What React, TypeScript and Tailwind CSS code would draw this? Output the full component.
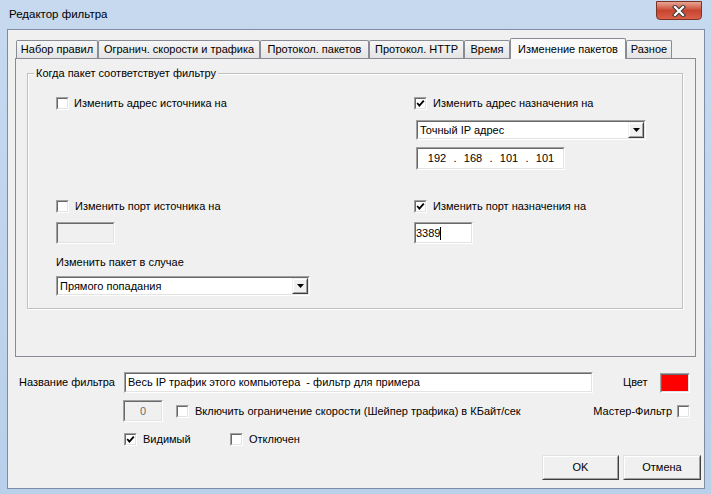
import React from "react";

function Sunken({
  className,
  inner,
  children,
}: {
  className: string;
  inner: string;
  children?: React.ReactNode;
}) {
  return (
    <div
      className={
        "shrink-0 border border-t-[#a0a0a0] border-l-[#a0a0a0] border-r-white border-b-white " +
        className
      }
    >
      <div
        className={
          "w-full h-full border border-t-[#696969] border-l-[#696969] border-r-[#e3e3e3] border-b-[#e3e3e3] " +
          inner
        }
      >
        {children}
      </div>
    </div>
  );
}

function Check({ checked, className }: { checked?: boolean; className?: string }) {
  return (
    <div
      className={
        "w-[13px] h-[13px] shrink-0 border border-t-[#a0a0a0] border-l-[#a0a0a0] border-r-white border-b-white " +
        (className ?? "")
      }
    >
      <div className="w-full h-full border border-t-[#696969] border-l-[#696969] border-r-[#e3e3e3] border-b-[#e3e3e3] bg-white flex items-center justify-center">
        {checked && (
          <svg width="9" height="9" viewBox="0 0 9 9">
            <path d="M1.2 4 L3.4 6.6 L7.8 1.6" stroke="#000" strokeWidth="1.8" fill="none" />
          </svg>
        )}
      </div>
    </div>
  );
}

function Raised({
  className,
  children,
}: {
  className: string;
  children?: React.ReactNode;
}) {
  return (
    <div
      className={
        "shrink-0 border border-t-[#e3e3e3] border-l-[#e3e3e3] border-r-[#404040] border-b-[#404040] " +
        className
      }
    >
      <div className="w-full h-full border border-t-white border-l-white border-r-[#a0a0a0] border-b-[#a0a0a0] bg-[#f0f0f0] flex items-center justify-center">
        {children}
      </div>
    </div>
  );
}

function Combo({ text, className }: { text: string; className: string }) {
  return (
    <Sunken className={className} inner="bg-white flex items-center">
      <span className="pl-[2px] flex-1 leading-[13px]">{text}</span>
      <div className="w-[16px] h-full shrink-0 border border-t-[#f0f0f0] border-l-[#f0f0f0] border-r-[#404040] border-b-[#404040]">
        <div className="w-full h-full border border-t-white border-l-white border-r-[#a0a0a0] border-b-[#a0a0a0] bg-[#f0f0f0] flex items-center justify-center">
          <svg width="7" height="4" viewBox="0 0 7 4">
            <polygon points="0,0 7,0 3.5,4" fill="#000" />
          </svg>
        </div>
      </div>
    </Sunken>
  );
}

function Tab({ label, w, selected }: { label: string; w: string; selected?: boolean }) {
  if (selected) {
    return (
      <div
        className={
          "h-[21px] -mb-px relative z-10 border border-b-0 border-[#898c95] rounded-t-[2px] bg-[#fafafa] flex items-center justify-center leading-[13px] " +
          w
        }
      >
        {label}
      </div>
    );
  }
  return (
    <div
      className={
        "h-[18px] border border-b-0 border-[#898c95] rounded-t-[2px] bg-linear-to-b from-[#f6f6f6] to-[#e4e4e4] flex items-center justify-center leading-[13px] " +
        w
      }
    >
      {label}
    </div>
  );
}

export default function App() {
  return (
    <div className="w-[711px] h-[494px] overflow-hidden bg-linear-to-b from-[#c6d9ef] to-[#b9d0ea] text-[11px] text-black font-['Liberation_Sans',Arial,sans-serif] flex flex-col">
      {/* Title bar */}
      <div className="h-[29px] flex items-start shrink-0">
        <div className="pl-[9px] pt-[7px] text-[11.5px] leading-[15px] text-black">Редактор фильтра</div>
        <div className="ml-auto mr-[9px] mt-[1px] w-[46px] h-[19px] rounded-b-[4px] border border-[#7a3325] bg-linear-to-b from-[#e8a493] via-[#c7452e] to-[#d9604a] flex items-center justify-center">
          <svg width="14" height="12" viewBox="0 0 14 12">
            <path d="M3 2 L11 10 M11 2 L3 10" stroke="#3a3a3a" strokeWidth="4.2" strokeLinecap="square" fill="none" />
            <path d="M3 2 L11 10 M11 2 L3 10" stroke="#ffffff" strokeWidth="2.2" strokeLinecap="square" fill="none" />
          </svg>
        </div>
      </div>

      {/* Client area */}
      <div className="ml-[7px] w-[698px] h-[460px] shrink-0 border border-[#7d8ca3] bg-[#f0f0f0] flex flex-col">
        {/* Tabs */}
        <div className="mt-[8px] ml-[8px] h-[20px] flex items-end">
          <Tab label="Набор правил" w="w-[82px]" />
          <Tab label="Огранич. скорости и трафика" w="w-[162px]" />
          <Tab label="Протокол. пакетов" w="w-[109px]" />
          <Tab label="Протокол. HTTP" w="w-[95px]" />
          <Tab label="Время" w="w-[46px]" />
          <Tab label="Изменение пакетов" w="w-[116px]" selected />
          <Tab label="Разное" w="w-[46px]" />
        </div>

        {/* Tab panel */}
        <div className="ml-[7px] w-[681px] h-[299px] shrink-0 border border-[#898c95] bg-[#f0f0f0]">
          <div className="relative mt-[14px] ml-[11px] mr-[12px] h-[236px] border border-[#c0c0c0] shadow-[inset_1px_1px_0_#ffffff,1px_1px_0_#ffffff]">
            <div className="absolute -top-[7px] left-[6px] px-[2px] bg-[#f0f0f0] leading-[13px]">
              Когда пакет соответствует фильтру
            </div>
            <div className="flex pt-[23px] pl-[28px]">
              {/* Left column */}
              <div className="w-[358px] flex flex-col">
                <div className="h-[13px] flex items-center">
                  <Check />
                  <span className="ml-[5px] leading-[13px]">Изменить адрес источника на</span>
                </div>
                <div className="mt-[90px] h-[13px] flex items-center">
                  <Check />
                  <span className="ml-[6px] leading-[13px]">Изменить порт источника на</span>
                </div>
                <Sunken className="mt-[9px] w-[59px] h-[22px]" inner="bg-[#f0f0f0]" />
                <div className="mt-[12px] h-[13px] leading-[13px]">Изменить пакет в случае</div>
                <Combo className="mt-[7px] w-[254px] h-[20px]" text="Прямого попадания" />
              </div>
              {/* Right column */}
              <div className="flex flex-col">
                <div className="h-[13px] flex items-center">
                  <Check checked />
                  <span className="ml-[6px] leading-[13px]">Изменить адрес назначения на</span>
                </div>
                <Combo className="mt-[10px] ml-[2px] w-[230px] h-[20px]" text="Точный IP адрес" />
                <Sunken className="mt-[7px] ml-[2px] w-[149px] h-[23px]" inner="bg-white flex items-center pl-[6px] leading-[13px]">
                  <span className="w-[26px] text-center">192</span>
                  <span className="w-[10px] text-center">.</span>
                  <span className="w-[26px] text-center">168</span>
                  <span className="w-[10px] text-center">.</span>
                  <span className="w-[26px] text-center">101</span>
                  <span className="w-[10px] text-center">.</span>
                  <span className="w-[26px] text-center">101</span>
                </Sunken>
                <div className="mt-[30px] h-[13px] flex items-center">
                  <Check checked />
                  <span className="ml-[6px] leading-[13px]">Изменить порт назначения на</span>
                </div>
                <Sunken className="mt-[9px] w-[59px] h-[22px]" inner="bg-white flex items-center leading-[13px]">
                  <span>3389</span>
                  <span className="w-px h-[13px] bg-black" />
                </Sunken>
              </div>
            </div>
          </div>
        </div>

        {/* Bottom section */}
        <div className="mt-[15px] h-[21px] flex items-center pr-[14px]">
          <div className="pl-[11px] w-[116px] leading-[13px]">Название фильтра</div>
          <Sunken className="w-[469px] h-[21px]" inner="bg-white flex items-center pl-[2px] leading-[13px] whitespace-pre">
            Весь IP трафик этого компьютера  - фильтр для примера
          </Sunken>
          <div className="ml-[30px] leading-[13px]">Цвет</div>
          <Sunken className="ml-auto w-[30px] h-[20px]" inner="bg-[#ff0000]" />
        </div>

        <div className="mt-[7px] h-[22px] flex items-center pl-[115px] pr-[14px]">
          <Sunken className="w-[40px] h-[22px]" inner="bg-[#f0f0f0] flex items-center justify-center text-[#6d6d6d] leading-[13px]">
            0
          </Sunken>
          <Check className="ml-[13px]" />
          <span className="ml-[6px] leading-[13px]">
            Включить ограничение скорости (Шейпер трафика) в КБайт/сек
          </span>
          <span className="ml-auto leading-[13px]">Мастер-Фильтр</span>
          <Check className="ml-[5px]" />
        </div>

        <div className="mt-[11px] h-[13px] flex items-center pl-[116px]">
          <div className="w-[106px] flex items-center">
            <Check checked />
            <span className="ml-[6px] leading-[13px]">Видимый</span>
          </div>
          <div className="flex items-center">
            <Check />
            <span className="ml-[6px] leading-[13px]">Отключен</span>
          </div>
        </div>

        <div className="mt-[9px] flex justify-end gap-[4px] pr-[3px]">
          <Raised className="w-[77px] h-[25px]">
            <span className="leading-[13px]">OK</span>
          </Raised>
          <Raised className="w-[78px] h-[25px]">
            <span className="leading-[13px]">Отмена</span>
          </Raised>
        </div>
      </div>
    </div>
  );
}
